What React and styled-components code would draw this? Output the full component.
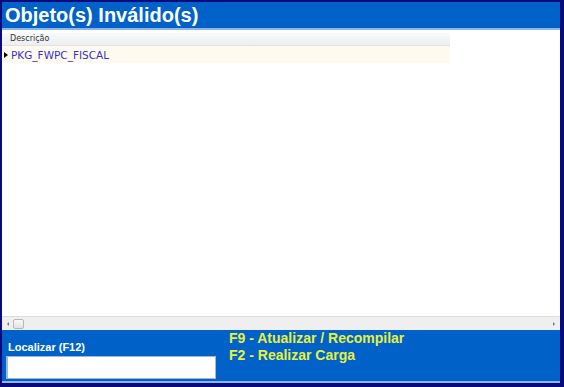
import styled, { createGlobalStyle } from "styled-components";

const GlobalStyle = createGlobalStyle`
  html, body {
    margin: 0;
    padding: 0;
    background: #ffffff;
  }
  body {
    font-family: "Liberation Sans", Arial, sans-serif;
  }
`;

export default function App() {
  return (
    <>
      <GlobalStyle />
      <Frame>
        <Header>Objeto(s) Inválido(s)</Header>
        <Content>
          <GridArea>
            <Grid>
              <GridHead>Descrição</GridHead>
              <GridRow>
                <RowMarker />
                <RowText>PKG_FWPC_FISCAL</RowText>
              </GridRow>
            </Grid>
          </GridArea>
          <ScrollBar>
            <ScrollArrow $dir="left" />
            <ScrollThumb />
            <ScrollTrack />
            <ScrollArrow $dir="right" />
          </ScrollBar>
        </Content>
        <Footer>
          <SearchBox>
            <SearchLabel>Localizar (F12)</SearchLabel>
            <SearchInput />
          </SearchBox>
          <Shortcuts>
            <Shortcut>F9 - Atualizar / Recompilar</Shortcut>
            <Shortcut>F2 - Realizar Carga</Shortcut>
          </Shortcuts>
        </Footer>
      </Frame>
    </>
  );
}

const Frame = styled.div`
  width: 564px;
  height: 387px;
  box-sizing: border-box;
  border-style: solid;
  border-color: #0a0a7a;
  border-width: 2px 4px 4px 2px;
  display: flex;
  flex-direction: column;
  background: #ffffff;
`;

const Header = styled.div`
  height: 28px;
  box-sizing: border-box;
  background: #0062c9;
  border-bottom: 2px solid #8fb4e6;
  color: #ffffff;
  font-weight: bold;
  font-size: 20px;
  line-height: 26px;
  padding-left: 3px;
`;

const Content = styled.div`
  flex: 1;
  display: flex;
  flex-direction: column;
  background: #ffffff;
`;

const GridArea = styled.div`
  flex: 1;
  padding-top: 3px;
`;

const Grid = styled.div`
  width: 448px;
`;

const GridHead = styled.div`
  height: 13px;
  box-sizing: border-box;
  background: linear-gradient(#f8f9fa, #eceef0);
  border-bottom: 1px solid #e0e2e4;
  font-family: "DejaVu Sans", sans-serif;
  font-size: 8px;
  line-height: 12px;
  color: #333333;
  padding-left: 8px;
`;

const GridRow = styled.div`
  height: 17px;
  background: #fffaf0;
  display: flex;
  align-items: center;
`;

const RowMarker = styled.span`
  width: 0;
  height: 0;
  margin-left: 2px;
  margin-right: 3px;
  border-top: 3px solid transparent;
  border-bottom: 3px solid transparent;
  border-left: 4px solid #000000;
`;

const RowText = styled.span`
  font-family: "DejaVu Sans", sans-serif;
  font-size: 10.5px;
  color: #3434c4;
`;

const ScrollBar = styled.div`
  height: 13px;
  display: flex;
  align-items: center;
  background: #efefef;
  border-top: 1px solid #dcdcdc;
  padding: 0 2px;
`;

const ScrollArrow = styled.span`
  width: 0;
  height: 0;
  margin: 0 3px;
  border-top: 2px solid transparent;
  border-bottom: 2px solid transparent;
  ${(p) =>
    p.$dir === "left"
      ? "border-right: 2px solid #777;"
      : "border-left: 2px solid #777;"}
`;

const ScrollThumb = styled.span`
  width: 11px;
  height: 10px;
  margin-left: 1px;
  box-sizing: border-box;
  border: 1px solid #b8b8b8;
  border-radius: 2px;
  background: linear-gradient(#fafafa, #e2e2e2);
`;

const ScrollTrack = styled.span`
  flex: 1;
`;

const Footer = styled.div`
  height: 53px;
  box-sizing: border-box;
  background: #0062c9;
  border-bottom: 2px solid #8fb4e6;
  display: flex;
  align-items: flex-start;
  padding-left: 4px;
`;

const SearchBox = styled.div`
  display: flex;
  flex-direction: column;
  padding-top: 10px;
`;

const SearchLabel = styled.div`
  color: #ffffff;
  font-weight: bold;
  font-size: 11px;
  line-height: 14px;
  padding-left: 2px;
`;

const SearchInput = styled.div`
  width: 210px;
  height: 23px;
  margin-top: 2px;
  box-sizing: border-box;
  background: #ffffff;
  border: 1px solid #9bb8e0;
  border-left: 2px solid #9bb8e0;
`;

const Shortcuts = styled.div`
  margin-left: 13px;
  display: flex;
  flex-direction: column;
`;

const Shortcut = styled.div`
  color: #e6f03c;
  font-weight: bold;
  font-size: 14px;
  line-height: 17px;
`;
